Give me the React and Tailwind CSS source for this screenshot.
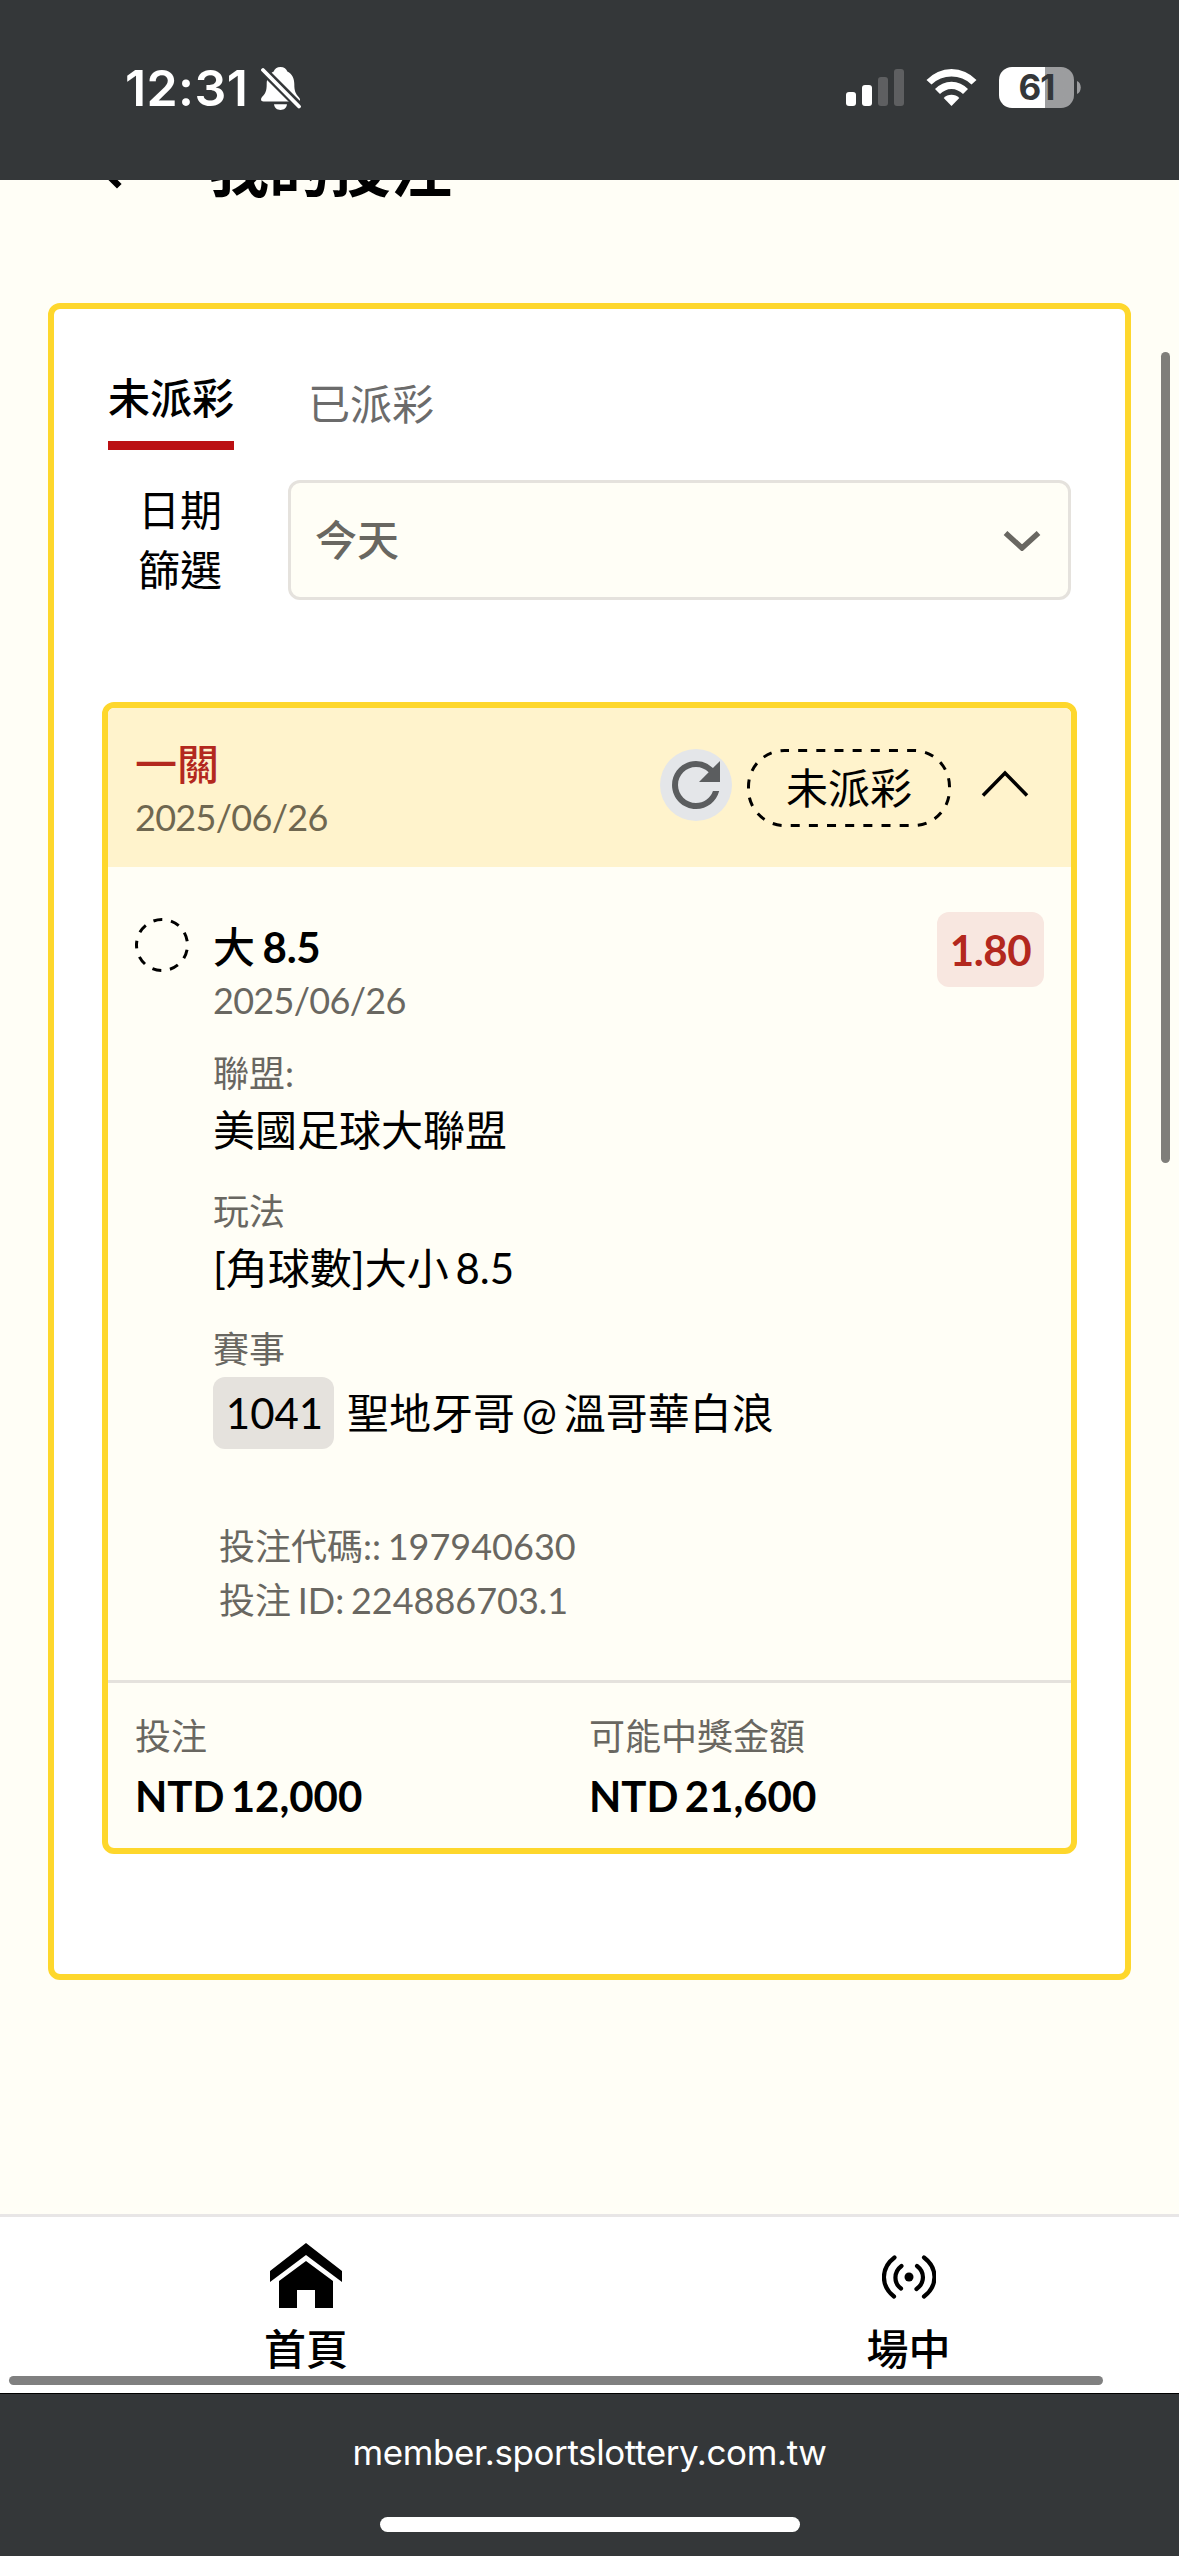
/**
 * App.jsx — My bets page (mobile web), with the phone's status and address bars.
 */

import React from "react";
import { MdRefresh } from "react-icons/md";

const BET = {
  title: "一關",
  date: "2025/06/26",
  status: "未派彩",
  side: "大",
  line: "8.5",
  odds: "1.80",
  league: "美國足球大聯盟",
  market: "[角球數]大小 8.5",
  code: "1041",
  match: "聖地牙哥 @ 溫哥華白浪",
  betCode: "197940630",
  betId: "224886703.1",
};

const TOTALS = [
  { label: "投注", value: "NTD 12,000" },
  { label: "可能中獎金額", value: "NTD 21,600" },
];

function StatusBar() {
  return (
    <div className="flex h-[180px] shrink-0 items-start justify-between bg-[#343739] pt-[67px] pr-[98px] pl-[125px] font-['Inter',sans-serif]">
      <div className="flex items-start">
        <span className="w-[136px] text-[50px] leading-[42px] font-semibold tracking-[0.4px] whitespace-nowrap text-white">12:31</span>
        <svg width="41" height="44" viewBox="0 0 41 44">
          <path d="M19.5 0C23 0 25.5 2 26.3 4.6C31.5 7 33.3 12 33.3 17C33.3 24 34.5 26.5 38 30.5C40 33 39 34.5 36.5 34.5H2.5C0 34.5 -.8 32.5 1 30C4.500 26.5 5.700 24 5.700 17C5.700 12 7.500 7 12.700 4.600C13.500 2 16 0 19.500 0Z" fill="#fff" />
          <path d="M13 37.300H26C25.500 41 23 43 19.500 43S13.500 41 13 37.300Z" fill="#fff" />
          <path d="M-1 0L42 43" stroke="#343739" strokeWidth="8.500" />
          <path d="M2 3L38 39.500" stroke="#fff" strokeWidth="3.800" strokeLinecap="round" />
        </svg>
      </div>

      <div className="flex items-start">
        <div className="mt-[2px] flex h-[37px] items-end gap-[6px]">
          <span className="h-[14px] w-[10px] rounded-[3px] bg-white" />
          <span className="h-[21px] w-[10px] rounded-[3px] bg-white" />
          <span className="h-[29px] w-[10px] rounded-[3px] bg-[#5e5f61]" />
          <span className="h-[37px] w-[10px] rounded-[3px] bg-[#5e5f61]" />
        </div>
        <svg className="mt-[2px] ml-[22px]" width="51" height="37" viewBox="0 0 51 37" fill="#fff">
          <path d="M.5 11A34 34 0 0 1 50.500 11L45.500 15.500A29 29 0 0 0 5.500 15.500Z" />
          <path d="M9 20A22.500 22.500 0 0 1 42 20L37 25A16 16 0 0 0 14 25Z" />
          <path d="M17.700 29A11 11 0 0 1 33.300 29L25.500 37Z" />
        </svg>
        <div className="ml-[22px] flex h-[41px] w-[75px] items-center justify-center rounded-[13px] bg-linear-to-r from-white from-[61%] to-[#9c9d9f] to-[61%] text-[35px] leading-none font-bold tracking-[-1px] text-[#343739]">
          61
        </div>
        <svg className="mt-[14px] ml-[3px]" width="4" height="13" viewBox="0 0 4 13">
          <path d="M0 0C5 2 5 11 0 13Z" fill="#9c9d9f" />
        </svg>
      </div>
    </div>
  );
}

function Tabs() {
  return (
    <div className="flex items-start gap-[74px] pl-[6px] text-[42px] leading-[60px]">
      <button className="h-[82px] border-b-[9px] border-[#bb1013] pb-[13px] font-medium text-black">未派彩</button>
      <button className="pt-[6px] text-[#6b6b6b]">已派彩</button>
    </div>
  );
}

function DateFilter() {
  return (
    <div className="mt-[30px] flex justify-between pr-[6px] pl-[36px]">
      <div className="w-[84px] text-[42px] leading-[60px] text-black">日期篩選</div>
      <div className="flex h-[120px] w-[783px] items-center justify-between rounded-[12px] border-[3px] border-[#e5e2dd] bg-[#fffef6] pr-[27px] pl-[24px]">
        <span className="text-[42px] leading-[60px] font-medium text-[#696761]">今天</span>
        <svg className="mt-[2px]" width="38" height="20" viewBox="0 0 38 20">
          <path d="M2.500 2L19 17L35.500 2" fill="none" stroke="#696761" strokeWidth="5.500" />
        </svg>
      </div>
    </div>
  );
}

function Field({ label, children }) {
  return (
    <div className="h-[138px]">
      <div className="text-[36px] leading-[54px] text-[#696761]">{label}</div>
      <div className="flex text-[42px] leading-[60px] [word-spacing:-4px] whitespace-pre text-black">{children}</div>
    </div>
  );
}

function BetCard() {
  return (
    <div className="mt-[102px] h-[1152px] overflow-hidden rounded-[12px] border-[6px] border-[#fed72c] bg-[#fffef6]">
      {/* Card header */}
      <div className="flex h-[159px] justify-between bg-[#fff3cc] pl-[27px]">
        <div className="pt-[26px]">
          <div className="text-[42px] leading-[60px] font-medium text-[#b3281e]">{BET.title}</div>
          <div className="mt-px text-[36px] leading-[44px] tracking-[-0.7px] text-[#6f6750]">{BET.date}</div>
        </div>
        <div className="flex pt-[41px] pr-[42px]">
          <div className="h-[72px] w-[72px] rounded-full bg-[#e4e6e9] text-[72px] text-[#5b5d5f]">
            <MdRefresh />
          </div>
          <div className="relative ml-[15px] h-[78px] w-[204px] text-center text-[42px] leading-[78px] text-black">
            {BET.status}
            <svg className="absolute inset-0" width="204" height="78">
              <rect x="1.5" y="1.5" width="201" height="75" rx="36" fill="none" stroke="#000" strokeWidth="3" strokeDasharray="9 9.160" strokeDashoffset="4.5" />
            </svg>
          </div>
          <svg className="mt-[21px] ml-[30px]" width="48" height="28" viewBox="0 0 48 28">
            <path d="M2 25.500L24 3L46 25.500" fill="none" stroke="#000" strokeWidth="3.500" />
          </svg>
        </div>
      </div>

      {/* Selection */}
      <div className="flex h-[816px] border-b-[3px] border-[#e5e2dd] pr-[27px] pl-[27px]">
        <svg className="mt-[51px] shrink-0" width="54" height="54" viewBox="0 0 54 54">
          <path d="M1.5 27A25.500 25.500 0 0 1 52.500 27A25.500 25.500 0 0 1 1.5 27" fill="none" stroke="#000" strokeWidth="3" strokeDasharray="9 8.802" strokeDashoffset="4.5" />
        </svg>
        <div className="ml-[24px] grow pt-[50px]">
          <div className="text-[42px] leading-[60px] font-bold tracking-[-0.3px] [word-spacing:-2px] text-black">
            <span className="font-medium">{BET.side}</span> {BET.line}
          </div>
          <div className="text-[36px] leading-[46px] tracking-[-0.7px] text-[#696761]">{BET.date}</div>
          <div className="mt-[23px]">
            <Field label="聯盟:">{BET.league}</Field>
            <Field label="玩法">{BET.market}</Field>
            <Field label="賽事">
              <span className="mt-px mr-[13px] h-[72px] w-[121px] shrink-0 rounded-[12px] bg-[#e5e2dd] pl-[2px] text-center leading-[73px]">{BET.code}</span>
              <span className="mt-px leading-[72px]">{BET.match}</span>
            </Field>
          </div>
          <div className="mt-[59px] pl-[6px] text-[36px] leading-[54px] [word-spacing:-2.5px] text-[#696761]">
            <p>投注代碼:: {BET.betCode}</p>
            <p>投注 ID: {BET.betId}</p>
          </div>
        </div>
        <div className="mt-[45px] h-[75px] w-[107px] shrink-0 rounded-[12px] bg-[#f8e7e0] text-center text-[42px] leading-[77px] font-bold tracking-[-0.4px] text-[#b3281e]">
          {BET.odds}
        </div>
      </div>

      {/* Totals */}
      <div className="grid grid-cols-2 pt-[26px] pl-[27px]">
        {TOTALS.map((t) => (
          <div key={t.label} className="last:-ml-[14px]">
            <div className="text-[36px] leading-[54px] text-[#696761]">{t.label}</div>
            <div className="mt-[3px] text-[42px] leading-[60px] font-bold [word-spacing:-4px] text-black">{t.value}</div>
          </div>
        ))}
      </div>
    </div>
  );
}

function BottomNav() {
  return (
    <nav className="relative flex h-[179px] shrink-0 border-t-[3px] border-[#e8e6e6] bg-white text-[42px] leading-[60px] font-medium text-black">
      <a className="flex w-[612px] flex-col items-center pt-[26px]">
        <svg width="72" height="65" viewBox="0 0 72 65">
          <path d="M36 0L72 28V39L36 12L0 39V28Z" />
          <path d="M36 18L63 38V65H45V47H27V65H9V38Z" />
        </svg>
        <span className="mt-[11px]">首頁</span>
      </a>
      <a className="flex w-[567px] flex-col items-center pt-[38px] pl-[26px]">
        <svg width="54" height="44" viewBox="0 0 54 44" fill="none" stroke="#000" strokeWidth="4.200" strokeLinecap="round">
          <path d="M12.500 2.500C-1.500 13 -1.500 31 12 41.500" />
          <path d="M42 2.500C56 13 56 31 42 41.500" />
          <path d="M19.500 11C11.500 17 11.500 28 19 33.500" />
          <path d="M35 11C43 17 43 28 34.500 34" />
          <circle cx="27" cy="22" r="4.500" fill="#000" stroke="none" />
        </svg>
        <span className="mt-[20px]">場中</span>
      </a>
      {/* horizontal scroll thumb */}
      <div className="absolute bottom-[8px] left-[9px] h-[9px] w-[1094px] rounded-full bg-[#808080]" />
    </nav>
  );
}

export default function App() {
  return (
    <div className="relative flex h-[2556px] w-[1179px] flex-col overflow-hidden bg-[#fffef6] font-['Lato','Noto_Sans_CJK_TC',sans-serif]">
      <StatusBar />

      <main className="grow overflow-hidden px-[48px]">
        {/* Page title, scrolled half out of view */}
        <div className="-mt-[51px] flex h-[80px] pl-[42px] text-black">
          <svg width="34" height="80" viewBox="0 0 34 80">
            <path d="M29.300 5L3 31L29.300 57.300" fill="none" stroke="#000" strokeWidth="6.500" />
          </svg>
          <h1 className="ml-[84px] text-[61px] leading-[80px] font-bold">我的投注</h1>
        </div>

        <section className="mt-[94px] h-[1677px] rounded-[12px] border-[6px] border-[#fed72c] bg-white px-[48px] pt-[59px]">
          <Tabs />
          <DateFilter />
          <BetCard />
        </section>
      </main>

      <BottomNav />

      <footer className="flex h-[163px] shrink-0 flex-col items-center border-t border-black bg-[#343739] font-['Inter',sans-serif]">
        <span className="mt-[34px] text-[35px] leading-[48px] tracking-[-0.4px] text-white">member.sportslottery.com.tw</span>
        <span className="mt-[41px] h-[15px] w-[420px] rounded-full bg-white" />
      </footer>

      {/* vertical scroll thumb */}
      <div className="absolute top-[352px] right-[9px] h-[811px] w-[9px] rounded-full bg-[#7f7e7a]" />
    </div>
  );
}
